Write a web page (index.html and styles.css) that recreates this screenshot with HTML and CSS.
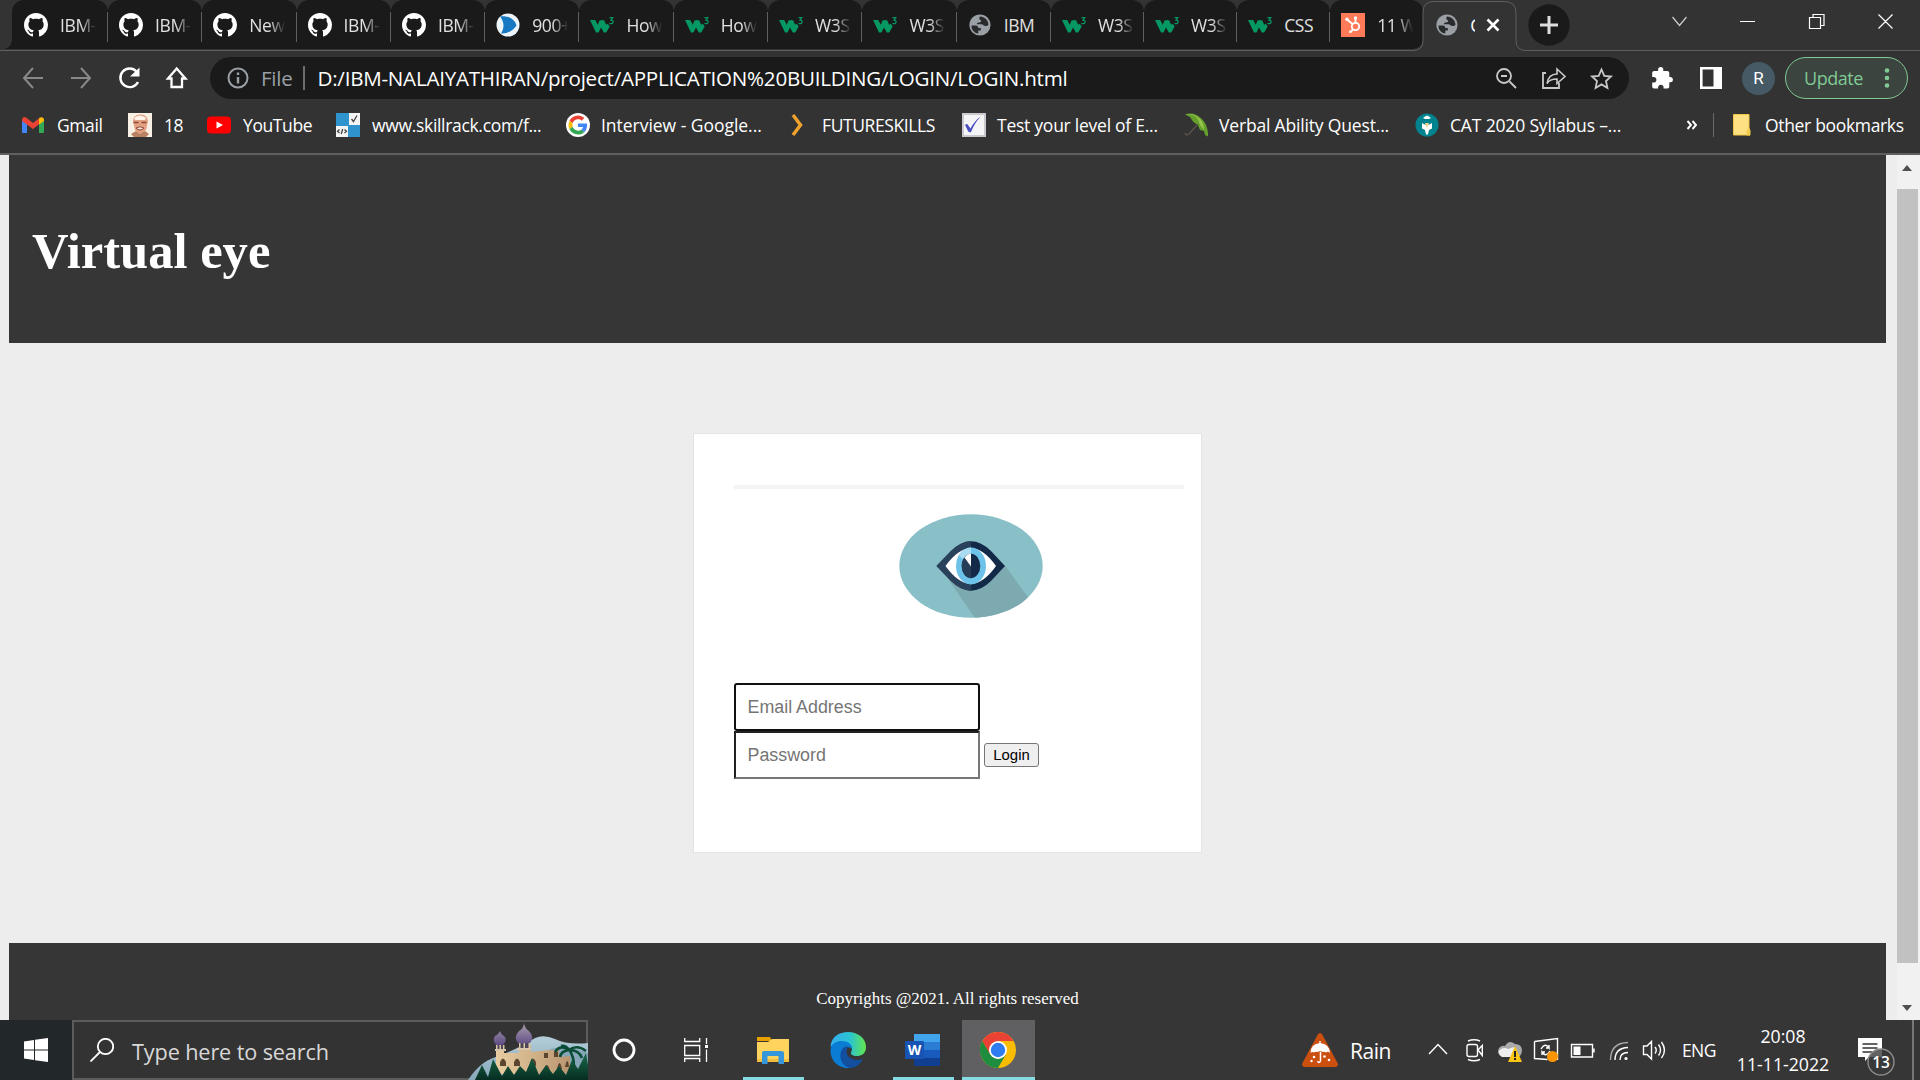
FILE: index.html
```html
<!DOCTYPE html>
<html lang="en">
<head>
<meta charset="utf-8">
<title>Virtual eye - Login</title>
<link rel="stylesheet" href="styles.css">
</head>
<body>
<svg class="defs" width="0" height="0" aria-hidden="true">
  <symbol id="github" viewBox="0 0 16 16"><path fill="#fff" d="M8 0C3.58 0 0 3.58 0 8c0 3.54 2.29 6.53 5.47 7.59.4.07.55-.17.55-.38 0-.19-.01-.82-.01-1.49-2.01.37-2.53-.49-2.69-.94-.09-.23-.48-.94-.82-1.13-.28-.15-.68-.52-.01-.53.63-.01 1.08.58 1.23.82.72 1.21 1.87.87 2.33.66.07-.52.28-.87.51-1.07-1.78-.2-3.64-.89-3.64-3.95 0-.87.31-1.59.82-2.15-.08-.2-.36-1.02.08-2.12 0 0 .67-.21 2.2.82.64-.18 1.32-.27 2-.27s1.36.09 2 .27c1.53-1.04 2.2-.82 2.2-.82.44 1.1.16 1.92.08 2.12.51.56.82 1.27.82 2.15 0 3.07-1.87 3.75-3.65 3.95.29.25.54.73.54 1.48 0 1.07-.01 1.93-.01 2.2 0 .21.15.46.55.38A8.01 8.01 0 0 0 16 8c0-4.42-3.58-8-8-8z"/></symbol>
  <symbol id="w3" viewBox="0 0 24 24"><path fill="#059862" d="M0 7h5.200l2.600 4.800L9.500 7.500q3-1.200 5 .2l1.600 4.100 1.700-1 1.900 2.600-3.500 6.200h-2.400l-2.800-5.200-2.500 5.200H6z"/><path fill="none" stroke="#059862" stroke-width="1.300" d="M19.500 4.600h3.200L21 7.200q2.400.2 2 2-.7 2.200-3.500 1.200"/></symbol>
  <symbol id="globe" viewBox="0 0 24 24"><circle cx="12" cy="12" r="10.600" fill="#9aa0a6"/><path fill="#292a2c" d="M3.500 12.500h4.200c1.800 0 2.600 1 2.600 2.500h2.500v2.500h-2.500v3c-4.200-.5-7-3.800-6.800-8zM12 3.500c-1 1.500-1 2.500.3 3.500 1.200.7 1.200 1.800-.2 2.300-1.600.5-3.300.4-3.300 2h4.500c1.800 0 2.600 1.800 4.200 1.800 1.500 0 2.300-.5 3-1.500-.3-4.600-3.900-7.700-8.500-8.100z"/></symbol>
  <symbol id="google" viewBox="0 0 48 48"><circle cx="24" cy="24" r="24" fill="#fff"/><g transform="translate(5 5) scale(.79)"><path fill="#EA4335" d="M24 9.500c3.540 0 6.710 1.220 9.210 3.600l6.850-6.850C35.900 2.380 30.470 0 24 0 14.620 0 6.510 5.380 2.560 13.220l7.980 6.190C12.430 13.720 17.740 9.500 24 9.500z"/><path fill="#4285F4" d="M46.980 24.550c0-1.570-.15-3.090-.38-4.550H24v9.020h12.940c-.58 2.960-2.260 5.480-4.780 7.180l7.730 6c4.510-4.180 7.090-10.360 7.090-17.650z"/><path fill="#FBBC05" d="M10.530 28.590c-.48-1.450-.76-2.990-.76-4.590s.27-3.140.76-4.590l-7.980-6.190C.92 16.460 0 20.120 0 24c0 3.880.92 7.540 2.560 10.780l7.970-6.190z"/><path fill="#34A853" d="M24 48c6.480 0 11.930-2.130 15.890-5.810l-7.730-6c-2.150 1.450-4.920 2.300-8.160 2.300-6.260 0-11.570-4.220-13.470-9.910l-7.980 6.190C6.510 42.620 14.620 48 24 48z"/></g></symbol>
</svg>

<header class="tabstrip">
  <div class="tab first"><svg class="fav"><use href="#github"/></svg><span>IBM-</span></div>
  <div class="tab"><svg class="fav"><use href="#github"/></svg><span>IBM-</span></div>
  <div class="tab"><svg class="fav"><use href="#github"/></svg><span>New</span></div>
  <div class="tab"><svg class="fav"><use href="#github"/></svg><span>IBM-</span></div>
  <div class="tab"><svg class="fav"><use href="#github"/></svg><span>IBM-</span></div>
  <div class="tab"><svg class="fav" viewBox="0 0 24 24"><circle cx="12" cy="12" r="11.500" fill="#eef5fa"/><path fill="#1678c2" d="M4 3.500c8-1 15 2.500 16.500 9C17 18 11 21 5 20.500 8.500 15 8.500 9 4 3.500z"/></svg><span>900+</span></div>
  <div class="tab"><svg class="fav"><use href="#w3"/></svg><span>How</span></div>
  <div class="tab"><svg class="fav"><use href="#w3"/></svg><span>How</span></div>
  <div class="tab"><svg class="fav"><use href="#w3"/></svg><span>W3S</span></div>
  <div class="tab"><svg class="fav"><use href="#w3"/></svg><span>W3S</span></div>
  <div class="tab"><svg class="fav"><use href="#globe"/></svg><span class="whole">IBM</span></div>
  <div class="tab slim"><svg class="fav"><use href="#w3"/></svg><span>W3S</span></div>
  <div class="tab slim"><svg class="fav"><use href="#w3"/></svg><span>W3S</span></div>
  <div class="tab slim"><svg class="fav"><use href="#w3"/></svg><span class="whole">CSS</span></div>
  <div class="tab slim last"><svg class="fav" viewBox="0 0 24 24"><path fill="#ff7a59" d="M0 0h24v24H0z"/><g fill="none" stroke="#fff" stroke-width="1.800"><circle cx="14.500" cy="13.500" r="3.700"/><path d="M14.500 9.800V5M11.500 11 6 6.500M12 16.500l-2.500 2.500"/></g><g fill="#fff"><circle cx="14.500" cy="5" r="1.700"/><circle cx="6" cy="6.300" r="1.700"/><circle cx="9.300" cy="18.800" r="1.300"/></g></svg><span>11 W</span></div>
  <div class="tab active">
    <svg class="outline" viewBox="0 0 120 51"><path fill="#333" stroke="#5f5f5f" d="M0 50.500h3q10 0 10-10V12Q13 1.500 24 1.500h70q12 0 12 11v28q0 10 10 10h4v3H0z"/></svg>
    <svg class="fav"><use href="#globe"/></svg><span>C</span>
    <svg class="close" viewBox="0 0 14 14"><path stroke="#fff" stroke-width="2.600" d="m1.500 1.500 11 11m0-11-11 11"/></svg>
  </div>
  <svg class="newtab" viewBox="0 0 42 42"><circle cx="21" cy="21" r="20.700" fill="#1a1a1a"/><path stroke="#dedede" stroke-width="3" d="M21 12v18M12 21h18"/></svg>
  <svg class="winctl" viewBox="0 0 256 40" fill="none" stroke="#fff" stroke-width="1.200"><path stroke="#cfcfcf" d="m8.500 17 7 8.500 7-8.500"/><path d="M76 21.500h15M145.500 17.500h11v11h-11zM149 17.500v-3h11v11h-3M214.500 14.500l14 14m0-14-14 14"/></svg>
</header>

<nav class="toolbar">
  <svg class="navicons" viewBox="0 0 210 42" fill="none" stroke-width="2"><g stroke="#898989"><path d="M43 21H24m9-10L24 21l9 10M71 21h19m-9-10 9 10-9 10"/></g><g stroke="#fff" stroke-width="2.400"><path d="M136.500 14.500A9.300 9.300 0 1 0 138 25"/><path fill="#fff" stroke="none" d="M139.500 10.500v9h-9.500z"/><path stroke-width="2.300" stroke-linejoin="miter" d="M168 21.500 176.700 11.500 185.500 21.500H182V30h-10.500v-8.500z"/></g></svg>
  <div class="omnibox">
    <svg class="info" viewBox="0 0 22 22" fill="none" stroke="#9aa0a6" stroke-width="2"><circle cx="11" cy="11" r="9.500"/><path stroke-width="2.400" d="M11 10v6.500M11 5.500V8"/></svg>
    <span class="scheme">File</span><i class="bar"></i>
    <span class="url">D:/IBM-NALAIYATHIRAN/project/APPLICATION%20BUILDING/LOGIN/LOGIN.html</span>
    <svg class="omniicons" viewBox="0 0 124 42" fill="none" stroke="#c9c9c9" stroke-width="1.800"><circle cx="8" cy="19" r="7"/><path d="M13.500 24.500 20 31M5 19h6M50 16h-3v15h16v-5"/><path stroke-width="1.600" d="M51 26.500c1-6.500 5-9.500 10-9.500v-5l8 7.500-8 7v-4.500c-5 0-8 1-10 4.500z"/><path d="m105.500 12.500 2.800 6.300 6.700.7-5 4.600 1.400 6.800-5.900-3.500-5.900 3.500 1.400-6.800-5-4.600 6.700-.7z"/></svg>
  </div>
  <svg class="puzzle" viewBox="0 0 22 22"><path fill="#fff" d="M18.800 10h-1.500V6c0-1.200-.9-2-2-2h-4V2.700a2.600 2.600 0 0 0-5.200 0V4H2.200C1 4 .2 4.800.2 6v3.900h1.400a2.800 2.800 0 0 1 0 5.600H.2v4c0 1.200.8 2 2 2h3.900v-1.400a2.800 2.800 0 0 1 5.500 0v1.400h3.800c1.100 0 1.900-.9 1.900-2v-4.200h1.500a2.700 2.700 0 0 0 0-5.300z"/></svg>
  <svg class="side" viewBox="0 0 22 22"><path fill="none" stroke="#fff" stroke-width="2.600" d="M1.300 1.300h19.400v19.400H1.300z"/><path fill="#fff" d="M13.500 1H21v20h-7.500z"/></svg>
  <div class="avatar">R</div>
  <div class="update"><span>Update</span><svg viewBox="0 0 6 20" fill="#81c995"><circle cx="3" cy="2.500" r="2.300"/><circle cx="3" cy="10" r="2.300"/><circle cx="3" cy="17.500" r="2.300"/></svg></div>
</nav>

<nav class="bookmarks">
  <a class="bm b1"><svg viewBox="0 0 24 24"><path fill="#4285f4" d="M1 7v12.500Q1 20 2 20h4V10z"/><path fill="#34a853" d="M18 10v10h4q1 0 1-1V7z"/><path fill="#ea4335" d="M1 6.500Q2 3 5 4.500l7 5.500 7-5.500v6L12 16 1 8z"/><path fill="#fbbc04" d="M18 5.300C20.500 3 23 4.500 23 7v1l-5 3.500z"/></svg><span>Gmail</span></a>
  <a class="bm b2"><svg viewBox="0 0 24 24"><path fill="#f8efe5" d="M0 0h24v24H0z"/><path fill="#e3a181" d="M5 8q0-6 7-6.500T20 8l-2 9-5 5-6-5z"/><path fill="#fff3ea" d="M6 5q6-5 12 0l-1 2H7z"/><path fill="none" stroke="#8a4a38" stroke-width="1.400" d="M5.500 9.500h5m3 0h5"/><path fill="#f7e6dc" stroke="#8a4a38" d="M8 15q4-2.500 8 0-4 4-8 0z"/><path fill="#b98263" d="m3 21 5-3 4 3 5-3 4 3-3 3H6z"/></svg><span>18</span></a>
  <a class="bm b3"><svg viewBox="0 0 24 24"><rect y="3.500" width="24" height="17" rx="4" fill="#f00"/><path fill="#fff" d="m9.500 8.500 6.500 3.500-6.500 3.500z"/></svg><span>YouTube</span></a>
  <a class="bm b4"><svg viewBox="0 0 24 24"><path fill="#2f94ce" d="M0 0h24v24H0z"/><path fill="#f4f4f4" d="M13 0h11v12H13zM0 13h12v11H0z"/><path fill="none" stroke="#444" stroke-width="1.300" d="m15.500 6 2 2.500L21 2.500M3.500 16.500l-2 1.800 2 1.800M8.500 16.500l2 1.800-2 1.800M6.700 16l-1.400 5"/></svg><span>www.skillrack.com/f...</span></a>
  <a class="bm b5"><svg><use href="#google"/></svg><span>Interview - Google...</span></a>
  <a class="bm b6"><svg viewBox="0 0 24 24"><path fill="none" stroke="#f0a22e" stroke-width="3.500" d="m8 2 7.500 10L8 22"/></svg><span>FUTURESKILLS</span></a>
  <a class="bm b7"><svg viewBox="0 0 24 24"><path fill="#f5f5f8" stroke="#c9c9cf" stroke-width="2" d="M1 1h22v22H1z"/><path fill="#4b4fc4" d="M3 12q2-2 3 0l2.500 3.500Q13 7 19 3.500 13 9 9 19q-2 1-3-1z"/></svg><span>Test your level of E...</span></a>
  <a class="bm b8"><svg viewBox="0 0 24 24"><path fill="#659f2c" d="M1 1.500C10-2.500 25 6 24 23.500l-3-1.500-1-4-4-1-2-4.500-5-4L6 4z"/><path fill="#95c24c" d="M3 1q11 0 13 11l4 5Q20 5 8 1z"/><path fill="none" stroke="#5b5148" stroke-width="1.500" d="M14 11 5 21q-3 2-4-1"/></svg><span>Verbal Ability Quest...</span></a>
  <a class="bm b9"><svg viewBox="0 0 24 24"><circle cx="12" cy="12" r="11.500" fill="#00838f"/><path fill="#fff" d="M8 5q2-2 4-2.500Q14 3 16 5l-2 1h-4zM7 10l2.500 1.500h5L17 10v5.500L14 17l-1 4.500h-2L10 17l-3-1.500z"/><path fill="#f2cf8d" d="M10 10h4l-2 5z"/></svg><span>CAT 2020 Syllabus –...</span></a>
  <svg class="more" viewBox="0 0 12 10" fill="none" stroke="#fff" stroke-width="1.900"><path d="m1.500 1 3.500 4-3.500 4M6.500 1 10 5 6.500 9"/></svg>
  <i class="sep"></i>
  <a class="bm b10"><svg viewBox="0 0 24 24"><path fill="#ffe083" stroke="#f2c744" d="M3.500 1.500H19v14.500l1 1v5H3.500z"/><path fill="#f3cc4a" d="M16.500 17.500 20 15v7.500h-3.500z"/></svg><span>Other bookmarks</span></a>
</nav>

<main class="viewport">
  <div class="page">
    <div class="banner"><h1>Virtual eye</h1></div>
    <form class="card">
      <div class="rule"></div>
      <svg class="eye" viewBox="0 0 144 107" preserveAspectRatio="none"><defs><clipPath id="oval"><ellipse cx="72" cy="53.500" rx="71.700" ry="53.300"/></clipPath></defs><g clip-path="url(#oval)"><path fill="#89bfc7" d="M0 0h144v107H0z"/><path fill="#7daab0" d="m48 65 28 42h60l-7-21-23-33z"/></g><path fill="#122a47" d="M37.500 53.500 52 38q20-20 40 0l14 15.500L92 69q-20 20-40 0z"/><path fill="#2a415c" d="M37.500 53.500 52 38q10-10 20-10v51q-10 0-20-10z"/><path fill="#fff" d="M46.500 53.500Q72 17 97 53.500 72 90 46.500 53.500z"/><ellipse cx="72" cy="53.500" rx="15" ry="19" fill="#6cc2e8"/><path fill="#a9dcf2" d="M72 34.500q-7 0-12 8L72 54z"/><ellipse cx="72" cy="53.500" rx="9.300" ry="12.500" fill="#122a47"/><path fill="#263d57" d="M72 53.500V66q-8 0-9.300-12.500 0-5 2-8z"/><path fill="#fff" d="M72 41q-4 0-6.500 4L72 54z"/></svg>
      <input class="field focused" type="text" placeholder="Email Address">
      <div class="row"><input class="field" type="password" placeholder="Password"><button class="login" type="button">Login</button></div>
    </form>
    <footer class="foot">Copyrights @2021. All rights reserved</footer>
  </div>
  <div class="scrollbar"><i class="up"></i><i class="thumb"></i><i class="down"></i></div>
</main>

<section class="taskbar">
  <div class="start"><svg viewBox="0 0 24 24" fill="#fff"><path d="M0 3.500 10 2v9.500H0zM11 1.800 24 0v11.500H11zM0 12.500h10V22L0 20.500zM11 12.500h13V24l-13-1.800z"/></svg></div>
  <div class="search">
    <svg class="lens" viewBox="0 0 24 24" fill="none" stroke="#fff" stroke-width="1.800"><circle cx="15.500" cy="8.500" r="7.700"/><path d="M10 14 .5 23.500"/></svg>
    <span>Type here to search</span>
    <svg class="castle" viewBox="0 0 120 57"><defs><linearGradient id="dome" x2="0" y2="1"><stop stop-color="#a99fb0"/><stop offset="1" stop-color="#604c84"/></linearGradient><linearGradient id="hill" x2="0" y2="1"><stop stop-color="#b4cdd8"/><stop offset="1" stop-color="#86a8ba"/></linearGradient><linearGradient id="sand" x2="1" y2="0"><stop stop-color="#e8cda1"/><stop offset="1" stop-color="#b99670"/></linearGradient><linearGradient id="tree" x2="0" y2="1"><stop stop-color="#1b6a49"/><stop offset="1" stop-color="#062d22"/></linearGradient></defs>
      <path fill="url(#hill)" d="M0 57Q14 36 32 33l28-13q11-11 27-4 12 6 33 4v37z"/><path fill="#86a6b8" d="M75 30q18-12 45 0v15H80z"/>
      <path fill="url(#sand)" d="M28 30h25l28-3h10v7l11-1v18H28zM28 22h8v10h-8zM51 22h12v8H51z"/>
      <path fill="url(#dome)" d="M32 8q.5 3 4 5 4 4-1 9h-7q-4-5-1-9 4-2 5-5zM56 0q.5 5 5 8 6 6 1 12H50q-5-6 1-12 5-3 5-8z"/><path fill="#4c4555" d="M29 22h6v5h-6zM51 20h11v5H51z"/><path fill="#d9c6aa" d="M28 22h1.500v5H28zM31.500 22H33v5h-1.500zM35 22h1.500v5H35zM51 20h1.500v5H51zM55.500 20H57v5h-1.500zM60.500 20H62v5h-1.500zM27 26h11v2H27zM49 25h14v2H49z"/>
      <g fill="#5b452e"><path d="M32 39q3-7 6 0v4h-6zM46 39q3-7 6 0v4h-6zM62 39q3-7 6 0v4h-6zM76 30h4v5h-4zM86 29h4v5h-4zM76 48q3-12 6 0zM89 46q2.500-12 5 0zM97 44q2.500-12 4 0z"/></g>
      <g fill="none" stroke="#0b4c38" stroke-width="2.600"><path d="M106 43q0-9-5-17M101 27q-9-6-14 2M101 27q-8 1-9 7M101 27q8-6 17 1M101 27q10 0 13 8M101 27q-3-5-8-4"/></g>
      <path fill="url(#tree)" d="m7 57 7-15 6 12 5-18 9 17 6-10 6 9 6-9 6 6 6-14 7 17 7-10 7 9 6-8 7 9 6-15 6 9 8-16 2 12v15z"/></svg>
  </div>
  <svg class="cortana" viewBox="0 0 24 24"><circle cx="12" cy="12" r="10" fill="none" stroke="#fff" stroke-width="2.800"/></svg>
  <svg class="taskview" viewBox="0 0 24 24" fill="none" stroke="#fff" stroke-width="1.300"><path d="M.7 0v3.500h15V0M.7 7.500h15v10H.7zM.7 24v-3.500h15V24M22.500 0v6M22.500 11.500V24"/><path fill="#fff" stroke="none" d="M21 7h3v3h-3z"/></svg>
  <div class="app explorer"><svg viewBox="0 0 36 36"><path fill="#e8a100" d="M2 5h13l2 4H2z"/><path fill="#ffd45e" d="M2 10h11l4-3h17v23H2z"/><path fill="#f3be3e" d="M2 27h32v3H2z"/><path fill="#3596dc" d="M7 32V21q0-2 2-2h17q3 0 3 2v11h-5.500v-8H12.500v8z"/></svg></div>
  <div class="app edge"><svg viewBox="0 0 36 36"><defs><linearGradient id="edgeTop"><stop stop-color="#35aef0"/><stop offset=".55" stop-color="#2bc3d2"/><stop offset="1" stop-color="#62e64c"/></linearGradient></defs><path fill="url(#edgeTop)" d="M.5 15C1 5 9 0 18 0c11 0 18 7 18 15 0 7-5 9-9 9-5 0-6-2-6-3 0-2 1-2 1-4 0-4-4-6-8-7-6 0-11 2-13.500 5z"/><path fill="#0b7cd4" d="M.5 18C1 11 7 9 12 9c6 0 10 3 10 8-4-4-11-1-11 6 0 6 4 12 11 13C9 38 0 29 .5 18z"/><path fill="#124f9f" d="M13 16c-6 8-1 20 9 20 5-1 9-5 11-9-5 2-12 1-15-3-2-3-2-6 0-9-2-1-4 0-5 1z"/></svg></div>
  <div class="app word"><svg viewBox="0 0 36 36"><path fill="#41a5ee" d="M9 2h26v8H9z"/><path fill="#2b7cd3" d="M9 10h26v8H9z"/><path fill="#185abd" d="M9 18h26v8H9z"/><path fill="#103f91" d="M9 26h26v8H9z"/><rect y="9" width="19" height="18" rx="1" fill="#1854b4"/><text x="9.500" y="23" text-anchor="middle" class="wletter">W</text></svg></div>
  <div class="app chrome"><svg viewBox="0 0 36 36"><circle cx="18" cy="18" r="18" fill="#fbbc04"/><path fill="#ea4335" d="M2.400 9A18 18 0 0 1 33.600 9H18L10.200 22.500z"/><path fill="#1e8e3e" d="M2.400 9 10.200 22.500 18 27l7.800-4.500L18 36A18 18 0 0 1 2.400 9z"/><path fill="#ea4335" d="M2.400 9h31.200H18a9 9 0 0 0-8.500 11z"/><circle cx="18" cy="18" r="9" fill="#fff"/><circle cx="18" cy="18" r="7.200" fill="#2f7bf0"/></svg></div>
  <svg class="rainicon" viewBox="0 0 36 34"><path fill="#cb4f0f" d="M15.500 2q2.500-4 5 0L35.500 30q1.500 4-3 4h-29q-4.500 0-3-4z"/><path fill="#fff" d="M8.500 20q0-9 9.500-10 9.500 1 10 10-2-2-4-.5-1.500-1-3-.5-3-1.500-6 0-2-.5-3 .5-2-1-3.500.500zM17.300 8h1.400v3h-1.400z"/><path fill="none" stroke="#fff" stroke-width="1.500" d="M18.500 19v9q-1.500 3-3 0"/><g fill="#fff"><circle cx="12" cy="24" r="1.300"/><circle cx="22.500" cy="23.500" r="1.300"/><circle cx="27" cy="27" r="1.300"/><circle cx="9.500" cy="28" r="1.200"/></g></svg>
  <span class="rain">Rain</span>
  <svg class="tray" viewBox="1420 1016 260 64" fill="none" stroke="#fff" stroke-width="1.400"><path d="m1429 1054 9-9.500 9 9.500"/><rect x="1467" y="1044.500" width="10.500" height="12" rx="2"/><path d="m1478 1050 4.300-4.500v10zM1468 1041q6-2.500 12 0M1468 1059.500q6 2.500 12 0"/><g stroke="none"><path fill="#aaa" d="M1502 1057q-6-3-3-9 3-3 6-2 4-7 10-2 7 0 7 7-1 6-5 6z"/><path fill="#eee" d="M1500 1055q-3-4 1-6 4-2 7 0l6-2v10h-12z"/><path fill="#fbc514" d="M1515 1046l7 16h-14z"/><path fill="#222" d="M1514 1051h2v6h-2zM1514 1058h2v2h-2z"/></g><path d="M1534.500 1041.500 1557.500 1038.500V1060M1534.500 1041.500V1058.500l13 1"/><path d="M1541 1049q4-7 8-1v-3m0 3h-3M1550 1051q-4 7-8 1v3m0-3h3"/><circle cx="1552.500" cy="1056.500" r="5.500" fill="#ff9500" stroke="none"/><path d="M1571.500 1044.500h21v12.500h-21zM1594 1048.500v4"/><path fill="#fff" stroke="none" d="M1573.500 1046.500h7v8.500h-7z"/><path d="M1610.500 1060q0-17 17.500-17.500" stroke="#aaa"/><path d="M1615 1060q0-12 13-12.500M1620 1060q0-7.500 8-7.500" /><circle cx="1626" cy="1058.500" r="1.600" fill="#fff" stroke="none"/><path d="M1643.500 1046h3.500l4.500-4.500v17.500l-4.500-4.500h-3.500zM1655 1047q2.500 3 0 6.500M1658.500 1044.500q4 5.500 0 11M1661.500 1042q6 8.500 0 16"/></svg>
  <span class="lang">ENG</span>
  <div class="clock"><span>20:08</span><span class="date">11-11-2022</span></div>
  <div class="notif"><svg viewBox="0 0 38 38"><path fill="#fff" d="M0 0h24v19H11l-4 4v-4H0z"/><path stroke="#333" stroke-width="1.500" d="M4.500 6h15M4.500 10h15M4.500 14h10"/><circle cx="23" cy="24" r="13" fill="#3b3b3b" fill-opacity=".8" stroke="#8c8c8c" stroke-width="1.400"/></svg><b>13</b></div>
  <i class="desk"></i>
</section>
</body>
</html>
```
FILE: styles.css
```css
* { box-sizing: border-box; }
body { margin: 0; width: 1920px; height: 1080px; overflow: hidden; background: #333; color: #fff; font-family: "Open Sans", "Noto Sans", sans-serif; display: flex; flex-direction: column; }
svg { display: block; flex: none; }
span { white-space: nowrap; }
.defs { position: absolute; }

.tabstrip { height: 51px; flex: none; display: flex; background: #333; border-bottom: 1px solid #5f5f5f; padding-left: 12px; }
.tab { position: relative; width: 94.3px; height: 49px; flex: none; padding: 1px 0 0 11px; display: flex; align-items: center; background: #1a1a1a; border-radius: 12px 12px 0 0; font-size: 17.500px; color: #e0e0e0; }
.tab.first { width: 96px; padding-left: 12px; }
.tab.first::before { content: ""; position: absolute; left: -8px; bottom: 0; width: 8px; height: 10px; background: radial-gradient(ellipse 8px 10px at 0 0, #333 97%, #1a1a1a); }
.tab.slim { width: 93.1px; }
.tab:not(.last):not(.active)::after { content: ""; position: absolute; z-index: 1; right: 0; top: 12px; width: 1px; height: 30px; background: #5f5f5f; }
.tab.last { border-radius: 12px 12px 10px 0; }
.tab span { margin-left: 12px; width: 37px; overflow: hidden; letter-spacing: -.4px; -webkit-mask-image: linear-gradient(90deg, #000 55%, transparent 98%); mask-image: linear-gradient(90deg, #000 55%, transparent 98%); }
.tab span.whole { -webkit-mask-image: none; mask-image: none; }
.fav { width: 24px; height: 24px; }
.tab.active { width: 94px; background: none; padding-left: 12px; }
.tab.active .outline { position: absolute; left: -13px; top: 0; width: 120px; height: 51px; }
.tab.active .fav, .tab.active span, .tab.active .close { position: relative; }
.tab.active span { width: 5px; margin-left: 11px; color: #fff; -webkit-mask-image: none; mask-image: none; }
.tab.active .close { width: 14px; height: 14px; margin-left: 11px; }
.newtab { width: 42px; height: 42px; margin: 4px 0 0 11px; }
.winctl { width: 256px; height: 40px; margin-left: auto; }

.toolbar { height: 48px; flex: none; display: flex; align-items: center; padding-top: 6px; }
.navicons { width: 210px; height: 42px; }
.omnibox { width: 1419px; height: 42px; border-radius: 21px; background: #1a1a1a; display: flex; align-items: center; padding-left: 17px; font-size: 20.600px; }
.info { width: 22px; height: 22px; }
.scheme { color: #9aa0a6; width: 42px; margin-left: 12px; letter-spacing: -.3px; }
.bar { width: 1.500px; height: 24px; background: #6b6e72; }
.url { margin-left: 13px; letter-spacing: -.25px; }
.omniicons { width: 124px; height: 42px; margin-left: auto; margin-right: 9px; }
.puzzle { width: 22px; height: 22px; margin-left: 23px; }
.side { width: 22px; height: 22px; margin-left: 26px; }
.avatar { width: 33px; height: 33px; border-radius: 50%; background: #455a64; margin-left: 20px; text-align: center; font: 17px/33px Roboto, sans-serif; }
.update { width: 123px; height: 42px; margin-left: 10px; border: 1.500px solid #81c995; border-radius: 21px; background: #3b443e; color: #81c995; display: flex; align-items: center; padding-left: 18px; font-size: 18px; }
.update span { width: 73px; letter-spacing: -.45px; }
.update svg { width: 6px; height: 20px; margin-left: 7px; }

.bookmarks { height: 56px; flex: none; display: flex; align-items: center; padding: 0 0 3px 21px; border-bottom: 2px solid #5f5f5f; font-size: 17.500px; }
.bm { display: flex; align-items: center; flex: none; height: 30px; letter-spacing: -.4px; }
.bm svg { width: 24px; height: 24px; margin-right: 12px; }
.b1 { width: 107px; }
.b2 { width: 79px; }
.b3 { width: 129px; }
.b4 { width: 230px; letter-spacing: -.32px; }
.b5 { width: 219px; letter-spacing: -.03px; }
.b5 svg { margin-right: 11px; }
.b6 { width: 177px; }
.b6 svg { margin-right: 13px; }
.b7 { width: 222px; letter-spacing: -.25px; }
.b7 svg { margin-right: 11px; }
.b8 { width: 231px; letter-spacing: -.17px; }
.b8 svg { margin-right: 11px; }
.b9 { width: 271px; letter-spacing: -.16px; }
.b9 svg { margin-right: 11px; }
.more { width: 12px; height: 10px; }
.sep { width: 1px; height: 24px; background: #6a6a6a; margin: 0 16px 0 15px; }
.b10 { letter-spacing: -.33px; }
.b10 svg { margin-right: 11px; }

.viewport { height: 865px; flex: none; display: flex; background: #ededed; font-family: "Liberation Serif", serif; overflow: hidden; }
.page { width: 1877px; margin-left: 9px; display: flex; flex-direction: column; align-items: center; }
.banner { width: 100%; height: 188px; flex: none; background: #363636; display: flex; align-items: center; padding: 3px 0 0 23px; }
h1 { margin: 0; font-size: 50.600px; font-weight: bold; }
.card { width: 509px; height: 420px; flex: none; margin: 90px 0; background: #fff; border: 1px solid #e4e4e4; padding: 51px 16px 0 40px; display: flex; flex-direction: column; align-items: flex-start; }
.rule { width: 450px; height: 4px; background: #f4f4f4; flex: none; }
.eye { width: 144px; height: 104px; margin: 25px 0 65px 165px; }
.field { width: 246px; height: 48px; border: 2px inset #767676; background: #fff; padding: 0 11.500px; font: 17.850px "Liberation Sans", sans-serif; outline: none; flex: none; border-radius: 0; }
.field::placeholder { color: #757575; }
.field.focused { border: 2px solid #101010; border-radius: 3px; }
.row { display: flex; align-items: center; gap: 4px; }
.login { width: 55px; height: 24px; padding: 0; border: 1px solid #767676; border-radius: 3px; background: #efefef; color: #000; font: 14.900px "Liberation Sans", sans-serif; }
.foot { width: 100%; flex: 1; background: #363636; text-align: center; padding-top: 46px; font-size: 16.950px; line-height: 19px; }
.scrollbar { width: 23px; margin-left: 11px; background: #f1f1f1; display: flex; flex-direction: column; align-items: flex-start; }
.up, .down { border: 5.500px solid transparent; margin-left: 5px; }
.up { border-bottom: 6px solid #505050; border-top: 0; margin-top: 10px; }
.thumb { width: 21px; height: 774px; margin-top: 18px; background: #c1c1c1; }
.down { border-top: 6px solid #505050; border-bottom: 0; margin-top: 42px; }

.taskbar { height: 60px; flex: none; display: flex; align-items: center; background: #373637; }
.start { width: 72px; height: 60px; background: #22272a; padding: 18px 24px; }
.start svg { width: 24px; height: 24px; }
.search { position: relative; width: 516px; height: 60px; border: 2px solid #5c5c5c; background: #333; display: flex; align-items: center; color: #d8d8d8; font-size: 21.700px; padding-left: 16px; }
.lens { width: 24px; height: 24px; }
.search span { margin: 2px 0 0 18px; letter-spacing: -.14px; }
.castle { position: absolute; right: -2px; bottom: -2px; width: 120px; height: 57px; }
.cortana { width: 24px; height: 24px; margin-left: 24px; }
.taskview { width: 24px; height: 24px; margin: 0 35px 0 48px; }
.app { width: 61px; height: 60px; padding: 12px 0 0 12px; }
.app svg { width: 36px; height: 36px; }
.explorer, .word, .chrome { border-bottom: 3px solid #85dbe2; }
.edge { margin: 0 14px 0 14px; }
.chrome { width: 73px; margin-left: 8px; padding-left: 18px; background: #606062; }
.wletter { font: bold 14px "Open Sans", sans-serif; fill: #fff; }
.rainicon { width: 36px; height: 34px; margin: 0 12px 0 267px; }
.rain { width: 57px; font-size: 21px; letter-spacing: -.5px; padding-top: 2px; }
.tray { width: 260px; height: 64px; margin: 0 2px 0 13px; transform: translateY(-2px); }
.lang { width: 54px; font-size: 17.500px; letter-spacing: -.6px; }
.clock { width: 94px; height: 60px; display: flex; flex-direction: column; align-items: center; font-size: 17.700px; line-height: 28px; padding-top: 2px; letter-spacing: 0; }
.notif { position: relative; width: 38px; height: 38px; margin: 14px 0 0 28px; }
.notif b { position: absolute; left: 10px; top: 12px; width: 26px; text-align: center; font-size: 15.500px; line-height: 24px; font-weight: 600; }
.desk { width: 2px; height: 60px; background: #777; margin-left: 16px; }
```
